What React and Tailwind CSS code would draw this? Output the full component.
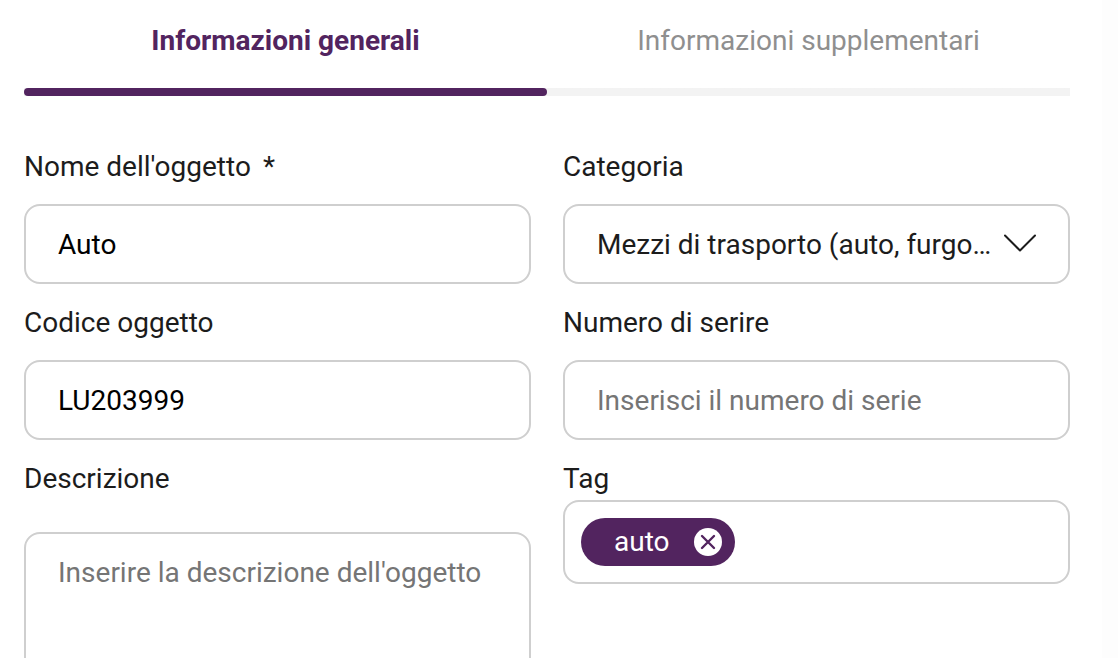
import { useState } from "react";

const labelClass = "mt-5 mb-[18px] block text-[28px] leading-[38px] text-[#1c1c1c]";
const boxClass =
  "w-full rounded-2xl border-2 border-[#cfcfcf] bg-white text-[28px] leading-[38px] outline-none placeholder:text-[#757575] focus:border-[#52245f]";

const tabs = [
  { id: "general", label: "Informazioni generali" },
  { id: "extra", label: "Informazioni supplementari" },
];

function Tabs({ active, onChange }) {
  return (
    <div role="tablist" className="grid grid-cols-2 bg-linear-to-t from-[#f3f3f3] from-8% to-white to-8%">
      {tabs.map((tab) => {
        const selected = tab.id === active;
        return (
          <button
            key={tab.id}
            type="button"
            role="tab"
            aria-selected={selected}
            onClick={() => onChange(tab.id)}
            className="flex cursor-pointer flex-col text-[28px] leading-[38px]"
          >
            <span
              className={
                selected
                  ? "w-full pt-[22px] pb-7 text-center font-bold text-[#52245f]"
                  : "w-full pt-[22px] pb-7 text-center text-[#8f8f8f]"
              }
            >
              {tab.label}
            </span>
            <span className={selected ? "h-2 w-full rounded-sm bg-[#52245f]" : "h-2 w-full"} />
          </button>
        );
      })}
    </div>
  );
}

function TextField({ id, label, required = false, ...props }) {
  return (
    <div>
      <label htmlFor={id} className={labelClass}>
        {label}
        {required ? <span className="ml-3">*</span> : null}
      </label>
      <input id={id} type="text" className={`${boxClass} h-20 px-8 text-black`} {...props} />
    </div>
  );
}

function CategorySelect() {
  return (
    <div>
      <label htmlFor="category" className={labelClass}>
        Categoria
      </label>
      <div className="relative">
        <select id="category" className={`${boxClass} h-20 appearance-none pt-0.5 pr-16 pl-8 text-[#1c1c1c]`}>
          <option>Mezzi di trasporto (auto, furgo…</option>
        </select>
        <svg
          viewBox="0 0 32 18"
          className="pointer-events-none absolute top-[30px] right-[34px] h-[18px] w-8"
          fill="none"
          stroke="#1c1c1c"
          strokeWidth="2"
          strokeLinecap="round"
          strokeLinejoin="round"
          aria-hidden="true"
        >
          <path d="M1 1.5 16 16.5 31 1.5" />
        </svg>
      </div>
    </div>
  );
}

function TagField() {
  const [tags, setTags] = useState(["auto"]);

  return (
    <div>
      <label htmlFor="tags" className="mt-5 mb-0.5 block text-[28px] leading-[38px] text-[#1c1c1c]">
        Tag
      </label>
      <div className={`${boxClass} flex items-center gap-3 p-4`}>
        {tags.map((tag) => (
          <span
            key={tag}
            className="flex h-12 items-center gap-6 rounded-full bg-[#52245f] pr-[13px] pl-[33px] text-white"
          >
            {tag}
            <button
              type="button"
              aria-label={`Rimuovi ${tag}`}
              onClick={() => setTags(tags.filter((t) => t !== tag))}
              className="cursor-pointer"
            >
              <svg viewBox="0 0 28 28" className="block size-7" aria-hidden="true">
                <circle cx="14" cy="14" r="14" fill="white" />
                <path d="M8 8 20 20M20 8 8 20" stroke="#52245f" strokeWidth="2.4" strokeLinecap="round" />
              </svg>
            </button>
          </span>
        ))}
        <input id="tags" type="text" className="h-12 min-w-0 flex-1 text-black outline-none" />
      </div>
    </div>
  );
}

export default function App() {
  const [tab, setTab] = useState("general");

  return (
    <div className="flex h-screen overflow-hidden bg-white font-[Roboto,sans-serif]">
      <main className="min-w-0 flex-1 pr-8 pl-6">
        <Tabs active={tab} onChange={setTab} />
        <form className="mt-8 grid grid-cols-2 gap-x-8">
          <TextField id="name" label="Nome dell'oggetto" required defaultValue="Auto" />
          <CategorySelect />
          <TextField id="code" label="Codice oggetto" defaultValue="LU203999" />
          <TextField id="serial" label="Numero di serire" placeholder="Inserisci il numero di serie" />
          <div>
            <label htmlFor="description" className="mt-5 mb-[34px] block text-[28px] leading-[38px] text-[#1c1c1c]">
              Descrizione
            </label>
            <textarea
              id="description"
              rows={6}
              placeholder="Inserire la descrizione dell'oggetto"
              className={`${boxClass} block resize-none px-8 py-5 text-black`}
            />
          </div>
          <TagField />
        </form>
      </main>
      <div className="w-4 bg-[#fdfdfd]" />
    </div>
  );
}
